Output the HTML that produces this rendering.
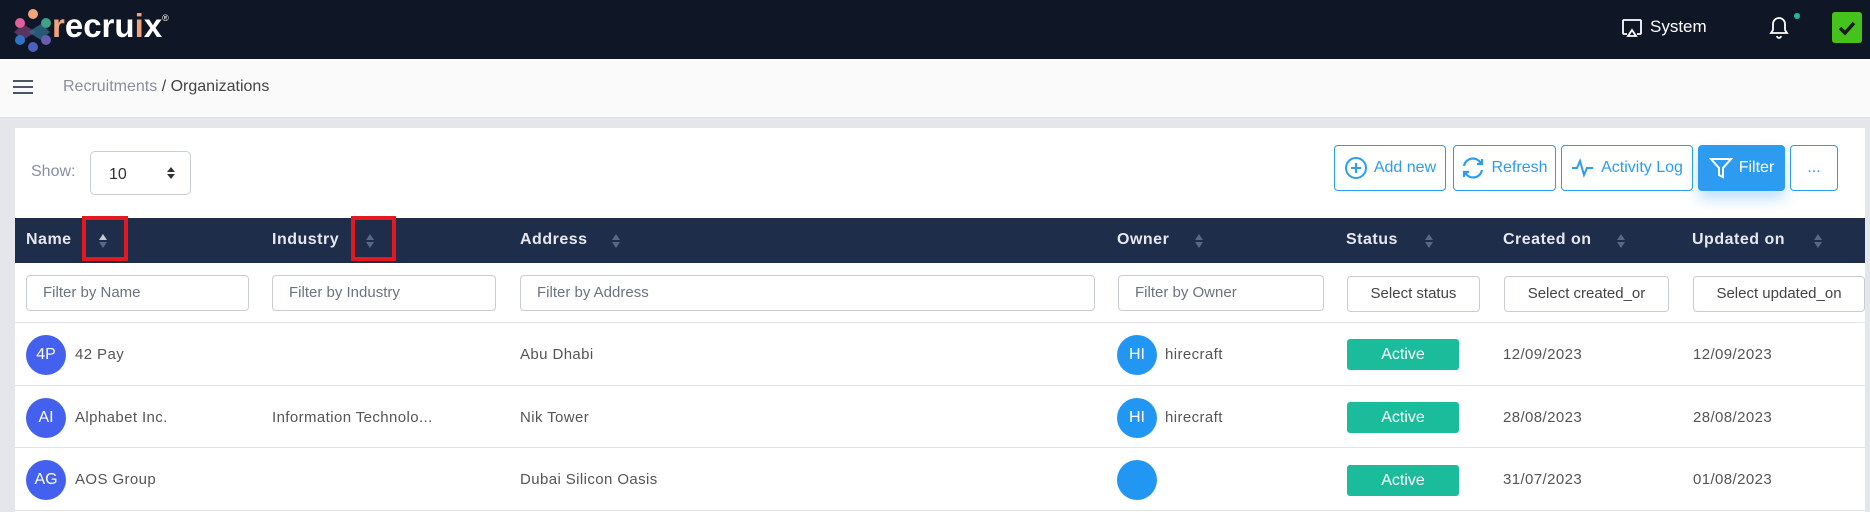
<!DOCTYPE html>
<html><head><meta charset="utf-8"><style>
*{box-sizing:border-box;margin:0;padding:0}
body{width:1870px;height:512px;overflow:hidden;background:#e4e6ec;font-family:"Liberation Sans",sans-serif;position:relative;color:#555}
.top{position:absolute;left:0;top:0;width:1870px;height:59px;background:#0f1727}
.crumb{position:absolute;left:0;top:59px;width:1870px;height:59px;background:#fafafb;border-bottom:1px solid #dcdfe6}
.card{position:absolute;left:15px;top:128px;width:1850px;height:384px;background:#fff}
.abs{position:absolute}
.btn{position:absolute;top:145px;height:46px;border:1px solid #2d9cf0;border-radius:4px;color:#2d9cf0;font-size:16px;display:flex;align-items:center;justify-content:center;gap:6px;background:#fff}
.th{position:absolute;top:218px;height:45px;left:15px;width:1850px;background:#1e2d4a}
.hl{position:absolute;top:231px;color:#e6e8ee;font-size:16px;font-weight:bold;letter-spacing:.5px}
.sort{position:absolute;top:233px;width:8px;height:16px}
.inp{position:absolute;top:275px;height:36px;border:1px solid #c8ccd4;border-radius:4px;font-size:15px;color:#6b7280;padding-left:16px;line-height:34px;background:#fff}
.sel{color:#444;text-align:center;padding-left:0;top:276px;height:36px}
.row{position:absolute;left:15px;width:1850px;border-top:1px solid #dfe2e8}
.av{position:absolute;width:40px;height:40px;border-radius:50%;color:#fff;font-size:16px;text-align:center;line-height:40px}
.t{position:absolute;font-size:15px;color:#555;letter-spacing:.4px}
.act{position:absolute;left:1347px;width:112px;height:31px;background:#1bbc9b;border-radius:3px;color:#fff;font-size:16px;text-align:center;line-height:31px}
.red{position:absolute;border:4px solid #e3191f}
</style></head><body>
<div class="top">
<svg class="abs" style="left:8px;top:8px" width="46" height="44" viewBox="0 0 46 44">
<path d="M15 16 L28 24 L15 32 L6 24Z" fill="#6b3a6e" opacity=".8"/>
<path d="M33 16 L20 24 L33 32 L42 24Z" fill="#2d6a8a" opacity=".8"/>
<circle cx="25" cy="6" r="5" fill="#f0a27a"/>
<circle cx="12" cy="15" r="5" fill="#e0609c"/>
<circle cx="38" cy="15" r="5" fill="#3fa18a"/>
<circle cx="12" cy="32" r="5" fill="#2f74c4"/>
<circle cx="38" cy="32" r="5" fill="#6a5bb3"/>
<circle cx="25" cy="39" r="5" fill="#4d5fbf"/>
</svg>
<div class="abs" style="left:52px;top:7px;font-size:33px;font-weight:bold;color:#fff;letter-spacing:0"><span style="color:#f0a27a">r</span>ecru<span style="color:#f0a27a">i</span>x<sup style="font-size:9px;font-weight:normal;vertical-align:top;position:relative;top:6px">®</sup></div>
<svg class="abs" style="left:1621px;top:17px" width="22" height="22" viewBox="0 0 22 22" fill="none" stroke="#fff" stroke-width="1.8"><path d="M6 17H3a1 1 0 0 1-1-1V4a1 1 0 0 1 1-1h16a1 1 0 0 1 1 1v12a1 1 0 0 1-1 1h-3"/><path d="M11 13l4 6H7z"/></svg>
<div class="abs" style="left:1650px;top:17px;font-size:17px;color:#fff">System</div>
<svg class="abs" style="left:1767px;top:14px" width="24" height="26" viewBox="0 0 24 26" fill="none" stroke="#fff" stroke-width="1.8"><path d="M4 19h16l-2-3v-6a6 6 0 0 0-12 0v6z"/><path d="M10 22a2 2 0 0 0 4 0"/></svg>
<div class="abs" style="left:1794px;top:13px;width:6px;height:6px;border-radius:50%;background:#1bbc9b"></div>
<div class="abs" style="left:1832px;top:12px;width:30px;height:31px;background:#45c21c;border-radius:3px"></div>
<svg class="abs" style="left:1836px;top:17px" width="22" height="22" viewBox="0 0 22 22"><path d="M4 11l5 5 9-10" fill="none" stroke="#1a1a1a" stroke-width="3.5"/></svg>
</div>
<div class="crumb">
<div class="abs" style="left:13px;top:21px;width:20px;height:2px;background:#4b5563;box-shadow:0 6px 0 #4b5563,0 12px 0 #4b5563"></div>
<div class="abs" style="left:63px;top:19px;font-size:16px;color:#8a8fa0">Recruitments <span style="color:#444">/ Organizations</span></div>
</div>
<div class="card"></div>
<div class="abs" style="left:31px;top:163px;font-size:16px;color:#8a8fa0">Show:</div>
<div class="abs" style="left:90px;top:151px;width:101px;height:44px;border:1px solid #c8ccd4;border-radius:5px;font-size:16px;color:#333;padding:14px 0 0 18px">10</div>
<svg class="abs" style="left:167px;top:167px" width="8" height="12"><path d="M0 5L4 0L8 5Z M0 7L4 12L8 7Z" fill="#333"/></svg>
<div class="btn" style="left:1334px;width:112px"><svg width="24" height="24" viewBox="0 0 24 24" fill="none" stroke="#2d9cf0" stroke-width="2"><circle cx="12" cy="12" r="10"/><path d="M12 7v10M7 12h10"/></svg>Add new</div>
<div class="btn" style="left:1453px;width:103px"><svg width="24" height="24" viewBox="0 0 24 24" fill="none" stroke="#2d9cf0" stroke-width="2.2"><path d="M3 10a9 9 0 0 1 16-4l2 2M21 14a9 9 0 0 1-16 4l-2-2"/><path d="M21 3v5h-5M3 21v-5h5"/></svg>Refresh</div>
<div class="btn" style="left:1561px;width:132px"><svg width="24" height="24" viewBox="0 0 24 24" fill="none" stroke="#2d9cf0" stroke-width="2"><path d="M1 12h5l3-7 4 14 3-7h6"/></svg>Activity Log</div>
<div class="btn" style="left:1698px;width:87px;background:#2d9cf0;color:#fff;box-shadow:0 8px 14px rgba(45,156,240,.3)"><svg width="24" height="24" viewBox="0 0 24 24" fill="none" stroke="#fff" stroke-width="2"><path d="M2 3h20l-8 9v9l-4-2v-7z"/></svg>Filter</div>
<div class="btn" style="left:1790px;width:48px">...</div>
<div class="th"></div>
<div class="hl" style="left:26px">Name</div>
<div class="hl" style="left:272px">Industry</div>
<div class="hl" style="left:520px">Address</div>
<div class="hl" style="left:1117px">Owner</div>
<div class="hl" style="left:1346px">Status</div>
<div class="hl" style="left:1503px">Created on</div>
<div class="hl" style="left:1692px">Updated on</div>
<svg class="sort" style="left:99px"><path d="M0 7L4 1L8 7Z" fill="#c6cad4"/><path d="M0 9L4 15L8 9Z" fill="#5b6680"/></svg>
<svg class="sort" style="left:366px"><path d="M0 7L4 1L8 7Z M0 9L4 15L8 9Z" fill="#5b6680"/></svg>
<svg class="sort" style="left:612px"><path d="M0 7L4 1L8 7Z M0 9L4 15L8 9Z" fill="#5b6680"/></svg>
<svg class="sort" style="left:1195px"><path d="M0 7L4 1L8 7Z M0 9L4 15L8 9Z" fill="#5b6680"/></svg>
<svg class="sort" style="left:1425px"><path d="M0 7L4 1L8 7Z M0 9L4 15L8 9Z" fill="#5b6680"/></svg>
<svg class="sort" style="left:1617px"><path d="M0 7L4 1L8 7Z M0 9L4 15L8 9Z" fill="#5b6680"/></svg>
<svg class="sort" style="left:1814px"><path d="M0 7L4 1L8 7Z M0 9L4 15L8 9Z" fill="#5b6680"/></svg>
<div class="red" style="left:82px;top:216px;width:46px;height:45px"></div>
<div class="red" style="left:351px;top:216px;width:45px;height:45px"></div>
<div class="inp" style="left:26px;width:223px">Filter by Name</div>
<div class="inp" style="left:272px;width:224px">Filter by Industry</div>
<div class="inp" style="left:520px;width:575px">Filter by Address</div>
<div class="inp" style="left:1118px;width:206px">Filter by Owner</div>
<div class="inp sel" style="left:1347px;width:133px">Select status</div>
<div class="inp sel" style="left:1504px;width:165px">Select created_or</div>
<div class="inp sel" style="left:1693px;width:172px">Select updated_on</div>
<div class="row" style="top:322px"></div>
<div class="row" style="top:385px"></div>
<div class="row" style="top:447px"></div>
<div class="row" style="top:510px"></div>
<div class="av" style="left:26px;top:335px;background:#4361ee">4P</div>
<div class="t" style="left:75px;top:346px">42 Pay</div>
<div class="t" style="left:520px;top:346px">Abu Dhabi</div>
<div class="av" style="left:1117px;top:335px;background:#2196f3">HI</div>
<div class="t" style="left:1165px;top:346px">hirecraft</div>
<div class="act" style="top:339px">Active</div>
<div class="t" style="left:1503px;top:346px">12/09/2023</div>
<div class="t" style="left:1693px;top:346px">12/09/2023</div>
<div class="av" style="left:26px;top:398px;background:#4361ee">AI</div>
<div class="t" style="left:75px;top:409px">Alphabet Inc.</div>
<div class="t" style="left:272px;top:409px">Information Technolo...</div>
<div class="t" style="left:520px;top:409px">Nik Tower</div>
<div class="av" style="left:1117px;top:398px;background:#2196f3">HI</div>
<div class="t" style="left:1165px;top:409px">hirecraft</div>
<div class="act" style="top:402px">Active</div>
<div class="t" style="left:1503px;top:409px">28/08/2023</div>
<div class="t" style="left:1693px;top:409px">28/08/2023</div>
<div class="av" style="left:26px;top:460px;background:#4361ee">AG</div>
<div class="t" style="left:75px;top:471px">AOS Group</div>
<div class="t" style="left:520px;top:471px">Dubai Silicon Oasis</div>
<div class="av" style="left:1117px;top:460px;background:#2196f3"></div>
<div class="act" style="top:465px">Active</div>
<div class="t" style="left:1503px;top:471px">31/07/2023</div>
<div class="t" style="left:1693px;top:471px">01/08/2023</div>
</body></html>
